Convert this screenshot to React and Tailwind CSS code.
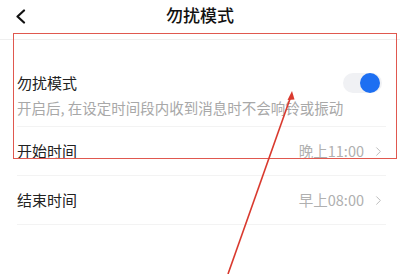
import { ChevronRight } from "lucide-react";

const FONT = { fontFamily: '"Noto Sans CJK SC", "Noto Sans", sans-serif' };

function TimeRow({ label, value }) {
  return (
    <div className="flex h-[49px] items-center justify-between border-b border-[#f3f3f3]">
      <span className="text-[15px] text-[#222]">{label}</span>
      <span className="flex items-center gap-[7px] text-[14.5px] text-[#b0b0b0]">
        {value}
        <ChevronRight size={15} strokeWidth={1.6} className="text-[#bdbdbd]" />
      </span>
    </div>
  );
}

export default function App() {
  return (
    <div className="relative h-[274px] w-[400px] overflow-hidden bg-white" style={FONT}>
      <header className="relative flex h-[40px] items-center justify-center border-b border-[#efefef]">
        <svg className="absolute left-[14px] top-[9px]" width="13" height="15" viewBox="0 0 13 15">
          <path d="M10 1.5 L3.5 7.5 L10 13.5" fill="none" stroke="#111" strokeWidth="2.2" strokeLinecap="round" strokeLinejoin="round" />
        </svg>
        <h1 className="mb-[10px] text-[17px] font-medium text-[#111]">勿扰模式</h1>
      </header>

      <div className="pl-[17px] pr-[14px]">
        <div className="border-b border-[#f3f3f3] pb-[7px] pt-[31px]">
          <div className="flex items-center justify-between">
            <span className="text-[15px] leading-[24px] text-[#222]">勿扰模式</span>
            <div className="mr-[4px] flex h-[20px] w-[39px] items-center justify-end rounded-full bg-[#f0f1f4] pr-[2px]">
              <span className="h-[20px] w-[20px] rounded-full bg-[#1d6ff2]" />
            </div>
          </div>
          <p className="mt-[1px] text-[14.5px] leading-[23px] text-[#a8a8a8]">开启后, 在设定时间段内收到消息时不会响铃或振动</p>
        </div>
        <TimeRow label="开始时间" value="晚上11:00" />
        <TimeRow label="结束时间" value="早上08:00" />
      </div>

      {/* annotation overlay */}
      <div className="pointer-events-none absolute left-[13px] top-[33px] h-[126px] w-[384px] border border-[#e0584f]" />
      <svg className="pointer-events-none absolute left-0 top-0" width="400" height="274">
        <line x1="228" y1="274" x2="291" y2="96" stroke="#d9392e" strokeWidth="1.6" />
        <path d="M292 91 L287.5 100 L294.5 99.5 Z" fill="#d9392e" />
      </svg>
    </div>
  );
}
